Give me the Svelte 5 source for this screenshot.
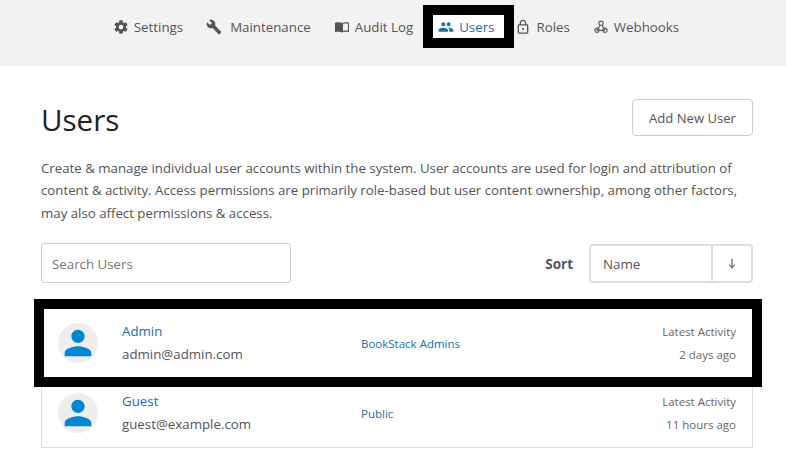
<script>
    const links = [
        { label: 'Settings', icon: 'settings' },
        { label: 'Maintenance', icon: 'build', gap: 8 },
        { label: 'Audit Log', icon: 'audit' },
        { label: 'Users', icon: 'users', active: true },
        { label: 'Roles', icon: 'lock' },
        { label: 'Webhooks', icon: 'webhook' }
    ];

    const users = [
        { name: 'Admin', email: 'admin@admin.com', role: 'BookStack Admins', activity: '2 days ago', marked: true },
        { name: 'Guest', email: 'guest@example.com', role: 'Public', activity: '11 hours ago' }
    ];
</script>

<nav class="tabs">
    {#each links as link}
        <a href="#top" class="tab" class:active={link.active}>
            <svg class="tab-icon" viewBox="0 0 24 24" aria-hidden="true">
                {#if link.icon === 'settings'}
                    <path d="M19.43 12.98c.04-.32.07-.64.07-.98s-.03-.66-.07-.98l2.11-1.65c.19-.15.24-.42.12-.64l-2-3.46c-.12-.22-.39-.3-.61-.22l-2.49 1c-.52-.4-1.08-.73-1.69-.98l-.38-2.65C14.46 2.18 14.25 2 14 2h-4c-.25 0-.46.18-.49.42l-.38 2.65c-.61.25-1.17.59-1.69.98l-2.49-1c-.23-.09-.49 0-.61.22l-2 3.46c-.13.22-.07.49.12.64l2.11 1.65c-.04.32-.07.65-.07.98s.03.66.07.98l-2.11 1.65c-.19.15-.24.42-.12.64l2 3.46c.12.22.39.3.61.22l2.49-1c.52.4 1.08.73 1.69.98l.38 2.65c.03.24.24.42.49.42h4c.25 0 .46-.18.49-.42l.38-2.65c.61-.25 1.17-.59 1.69-.98l2.49 1c.23.09.49 0 .61-.22l2-3.46c.12-.22.07-.49-.12-.64l-2.11-1.65zM12 15.5c-1.93 0-3.5-1.57-3.5-3.5s1.57-3.5 3.5-3.5 3.5 1.57 3.5 3.5-1.57 3.5-3.5 3.5z" />
                {:else if link.icon === 'build'}
                    <path d="M22.7 19l-9.1-9.1c.9-2.3.4-5-1.5-6.9-2-2-5-2.4-7.4-1.3L9 6 6 9 1.6 4.7C.4 7.1.9 10.1 2.9 12.1c1.9 1.9 4.6 2.4 6.9 1.5l9.1 9.1c.4.4 1 .4 1.4 0l2.3-2.3c.5-.4.5-1.1.1-1.4z" />
                {:else if link.icon === 'audit'}
                    <path fill-rule="evenodd" d="M1.500 5.500C5 4.500 9.500 4.500 12 6c2.500-1.500 7-1.500 10.500-.5V20c-3.500-1-8-1-10.500.3C9.500 19 5 19 1.500 20zM13.500 7.300v10.600c2-.8 5-.9 7.500-.5V7c-2.500-.5-5.500-.5-7.500.3z" />
                {:else if link.icon === 'users'}
                    <path d="M16 11c1.660 0 2.990-1.340 2.990-3S17.660 5 16 5c-1.660 0-3 1.340-3 3s1.340 3 3 3zm-8 0c1.660 0 2.990-1.340 2.990-3S9.660 5 8 5C6.340 5 5 6.340 5 8s1.340 3 3 3zm0 2c-2.330 0-7 1.170-7 3.500V19h14v-2.500c0-2.330-4.670-3.500-7-3.500zm8 0c-.290 0-.620.020-.970.050 1.160.840 1.970 1.970 1.970 3.450V19h6v-2.500c0-2.330-4.670-3.500-7-3.500z" />
                {:else if link.icon === 'lock'}
                    <path d="M12 16.500c.830 0 1.500-.670 1.500-1.500s-.670-1.500-1.500-1.500-1.500.670-1.500 1.500.670 1.500 1.500 1.500zm6-8.500h-1V6c0-2.760-2.240-5-5-5S7 3.240 7 6v2H6c-1.100 0-2 .9-2 2v10c0 1.100.9 2 2 2h12c1.100 0 2-.9 2-2V10c0-1.100-.9-2-2-2zM8.900 6c0-1.710 1.390-3.100 3.100-3.100s3.100 1.390 3.100 3.100v2H8.900V6zM18 20.300H6V9.800h12v10.500z" />
                {:else}
                    <g class="hook">
                        <circle cx="12" cy="6.500" r="3.200" />
                        <circle cx="6" cy="17" r="3.200" />
                        <circle cx="18" cy="17" r="3.200" />
                        <path d="M10.400 9.500 6 17h12M13.600 9.500 18 17" />
                    </g>
                {/if}
            </svg>
            <span class="tab-label" style:margin-left={link.gap ? `${link.gap}px` : null}>{link.label}</span>
        </a>
    {/each}
</nav>

<main class="page">
    <div class="head">
        <h1>Users</h1>
        <button class="outline-btn">Add New User</button>
    </div>

    <p class="intro">
        Create &amp; manage individual user accounts within the system. User accounts are used for login and attribution of
        content &amp; activity. Access permissions are primarily role-based but user content ownership, among other factors,
        may also affect permissions &amp; access.
    </p>

    <div class="filters">
        <input class="search" type="text" placeholder="Search Users" />
        <div class="sort">
            <span class="sort-label">Sort</span>
            <div class="sort-box">
                <span class="sort-name">Name</span>
                <span class="sort-dir">
                    <svg viewBox="0 0 24 24" aria-hidden="true">
                        <path d="M10.800 3h2.400v12.500l3-3 1.300 1.300L12 20.500l-5.500-6.700 1.300-1.300 3 3z" />
                    </svg>
                </span>
            </div>
        </div>
    </div>

    <div class="list">
        {#each users as user}
            <div class="row" class:marked={user.marked}>
                <div class="avatar">
                    <svg viewBox="0 0 24 24" aria-hidden="true">
                        <path d="M12 12c2.210 0 4-1.790 4-4s-1.790-4-4-4-4 1.790-4 4 1.790 4 4 4zm0 2c-2.670 0-8 1.340-8 4v2h16v-2c0-2.660-5.330-4-8-4z" />
                    </svg>
                </div>
                <div class="who">
                    <a href="#top">{user.name}</a>
                    <span>{user.email}</span>
                </div>
                <a href="#top" class="role">{user.role}</a>
                <div class="activity">
                    <span>Latest Activity</span>
                    <span>{user.activity}</span>
                </div>
            </div>
        {/each}
    </div>
</main>

<style>
    :global(body) {
        margin: 0;
        background: #fff;
        overflow: hidden;
        font-family: "Open Sans", "Noto Sans", sans-serif;
        color: #555;
    }

    a {
        text-decoration: none;
    }

    .tabs {
        height: 66px;
        box-sizing: border-box;
        background: #f2f2f2;
        border-bottom: 1px solid #eee;
        display: flex;
        justify-content: center;
        align-items: flex-start;
        gap: 6px;
        padding: 15px 0 0 13px;
    }

    .tab {
        display: flex;
        align-items: center;
        height: 23px;
        padding: 0 12px 0 5px;
        color: #555;
        font-size: 13.300px;
    }

    .tab.active {
        margin-left: 2px;
        padding-right: 10px;
        background: #fff;
        color: #206ea7;
        outline: 10px solid #000;
    }

    .tab-icon {
        width: 16px;
        height: 16px;
        fill: #555;
        flex: none;
    }

    .active .tab-icon {
        fill: #206ea7;
    }

    .tab-label {
        margin-left: 5px;
    }

    .hook {
        fill: none;
        stroke: #666;
        stroke-width: 1.800;
    }

    .page {
        padding: 33px 33px 0 41px;
    }

    .head {
        display: flex;
        justify-content: space-between;
        align-items: center;
        height: 37px;
    }

    h1 {
        margin: 4px 0 0;
        font-size: 29.500px;
        font-weight: 400;
        color: #222;
    }

    .outline-btn {
        width: 121px;
        height: 37px;
        background: #fff;
        border: 1px solid #ccc;
        border-radius: 4px;
        color: #555;
        font: inherit;
        font-size: 13.100px;
    }

    .intro {
        margin: 21px 0 0;
        font-size: 13.250px;
        line-height: 22.400px;
    }

    .filters {
        margin-top: 19px;
        display: flex;
        justify-content: space-between;
        align-items: flex-end;
    }

    .search {
        width: 250px;
        height: 40px;
        box-sizing: border-box;
        padding: 2px 10px 0;
        border: 1px solid #ccc;
        border-radius: 3px;
        font: inherit;
        font-size: 13.300px;
    }

    .search::placeholder {
        color: #777;
        opacity: 1;
    }

    .sort {
        display: flex;
        align-items: center;
        gap: 16px;
    }

    .sort-label {
        font-size: 13.500px;
        font-weight: 700;
    }

    .sort-box {
        width: 164px;
        height: 39px;
        box-sizing: border-box;
        display: flex;
        border: 2px solid #ddd;
        border-radius: 4px;
        font-size: 13.300px;
    }

    .sort-name {
        flex: 1;
        padding-left: 12px;
        line-height: 37px;
    }

    .sort-dir {
        width: 38px;
        border-left: 2px solid #ddd;
        display: flex;
        align-items: center;
        justify-content: center;
    }

    .sort-dir svg {
        width: 14px;
        height: 14px;
        fill: #777;
    }

    .list {
        margin-top: 24px;
        width: 712px;
        box-sizing: border-box;
        border: 1px solid #ddd;
        border-width: 0 1px;
    }

    .row {
        position: relative;
        height: 70px;
        box-sizing: border-box;
        display: grid;
        grid-template-columns: 64px 239px 1fr auto;
        align-items: center;
        padding: 2px 16px 0;
        background: #fff;
    }

    .row + .row {
        height: 71px;
        border-bottom: 1px solid #ddd;
    }

    .row.marked::after {
        content: "";
        position: absolute;
        z-index: 1;
        top: -8px;
        bottom: -10px;
        left: -8px;
        right: -10px;
        border: 10px solid #000;
        pointer-events: none;
    }

    .avatar {
        width: 40px;
        height: 40px;
        border-radius: 50%;
        background: #eee;
    }

    .avatar svg {
        display: block;
        fill: #0288d1;
    }

    .who {
        display: flex;
        flex-direction: column;
        gap: 2px;
        font-size: 13.300px;
        line-height: 21px;
    }

    .who a {
        color: #206ea7;
    }

    .role {
        color: #206ea7;
        font-size: 11.500px;
    }

    .activity {
        display: flex;
        flex-direction: column;
        align-items: flex-end;
        gap: 5px;
        font-size: 11.500px;
        line-height: 18px;
        color: #666;
    }
</style>
